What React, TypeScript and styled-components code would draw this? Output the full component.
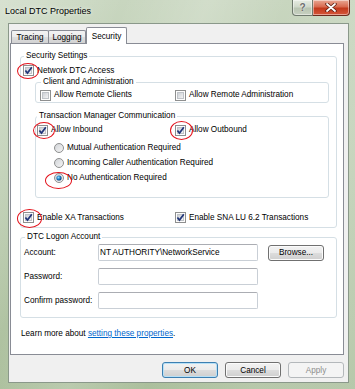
import React from "react";
import styled, { createGlobalStyle } from "styled-components";

const GlobalStyle = createGlobalStyle`
  html, body {
    margin: 0;
    padding: 0;
    background: #b7c9a8;
  }
  * {
    box-sizing: border-box;
  }
`;

const Check = ({ checked }: { checked?: boolean }) => (
  <svg width="11" height="11" viewBox="0 0 11 11">
    <defs>
      <linearGradient id="cbfill" x1="0" y1="0" x2="1" y2="1">
        <stop offset="0" stopColor="#c9cdd3" />
        <stop offset="1" stopColor="#f6f6f6" />
      </linearGradient>
    </defs>
    <rect x="0.5" y="0.5" width="10" height="10" fill="#fdfdfd" stroke="#8e8f8f" />
    <rect x="2.5" y="2.5" width="6" height="6" fill="url(#cbfill)" stroke="#bfc3c8" />
    {checked && (
      <path d="M2.4 5.4 L4.5 8.1 L8.8 2.2" fill="none" stroke="#22367a" strokeWidth="1.7" />
    )}
  </svg>
);

const Radio = ({ checked }: { checked?: boolean }) => (
  <svg width="10" height="10" viewBox="0 0 10 10">
    <defs>
      <linearGradient id="rbfill" x1="0" y1="0" x2="1" y2="1">
        <stop offset="0" stopColor="#cfd2d6" />
        <stop offset="1" stopColor="#f7f7f7" />
      </linearGradient>
      <radialGradient id="rbdot" cx="0.4" cy="0.4" r="0.6">
        <stop offset="0" stopColor="#8fdcff" />
        <stop offset="0.6" stopColor="#1a7cc4" />
        <stop offset="1" stopColor="#0b3f78" />
      </radialGradient>
    </defs>
    <circle cx="5" cy="5" r="4.5" fill="url(#rbfill)" stroke="#8e8f8f" />
    {checked && <circle cx="5" cy="5" r="2.6" fill="url(#rbdot)" />}
  </svg>
);

const Window = styled.div`
  width: 355px;
  height: 389px;
  display: flex;
  flex-direction: column;
  font-family: "Liberation Sans", Arial, sans-serif;
  font-size: 8.2px;
  color: #000;
  background:
    linear-gradient(110deg, rgba(255, 255, 255, 0.28) 0%, rgba(255, 255, 255, 0) 25%,
      rgba(255, 255, 255, 0.18) 42%, rgba(255, 255, 255, 0) 58%, rgba(255, 255, 255, 0.15) 80%),
    linear-gradient(180deg, #c8d6bf 0%, #bccdb1 45%, #abbf9c 100%);
`;

const TitleBar = styled.div`
  height: 23px;
  flex: none;
  display: flex;
  justify-content: space-between;
  align-items: flex-start;
  padding: 0 5px;
`;

const Title = styled.div`
  margin-top: 6px;
  font-size: 9px;
  line-height: 11px;
  text-shadow: 0 0 4px rgba(255, 255, 255, 0.9);
`;

const Captions = styled.div`
  display: flex;
`;

const CaptionButton = styled.div<{ $close?: boolean }>`
  height: 16px;
  width: ${(p) => (p.$close ? 37 : 21)}px;
  display: flex;
  align-items: center;
  justify-content: center;
  border: 1px solid ${(p) => (p.$close ? "#6b2a1c" : "#6f7a6e")};
  border-top: none;
  border-left-width: ${(p) => (p.$close ? 0 : 1)}px;
  border-radius: ${(p) => (p.$close ? "0 0 4px 0" : "0 0 0 4px")};
  background: ${(p) =>
    p.$close
      ? "linear-gradient(180deg, #e8a894 0%, #d86a50 45%, #c2391c 55%, #d5573a 100%)"
      : "linear-gradient(180deg, #e6ece2 0%, #d0d9cb 45%, #b9c5b2 55%, #c7d1c1 100%)"};
  box-shadow: inset 0 0 0 1px rgba(255, 255, 255, 0.45);
  color: #6e6e6e;
  font-weight: bold;
  font-size: 10px;
  text-shadow: 0 0 2px #fff;
`;

const Client = styled.div`
  height: 360px;
  margin: 0 6px 0 8px;
  flex: none;
  display: flex;
  flex-direction: column;
  border: 1px solid #8a988a;
  background: #f0f0f0;
  padding: 3px 4px 0 1px;
`;

const TabStrip = styled.div`
  height: 16px;
  display: flex;
  align-items: flex-end;
  padding-left: 1px;
`;

const Tab = styled.div<{ $active?: boolean; $w: number; $ml?: number }>`
  position: relative;
  z-index: ${(p) => (p.$active ? 1 : 0)};
  width: ${(p) => p.$w}px;
  height: ${(p) => (p.$active ? 17 : 13)}px;
  margin-left: ${(p) => p.$ml ?? 0}px;
  margin-bottom: ${(p) => (p.$active ? -1 : 0)}px;
  display: flex;
  align-items: center;
  justify-content: center;
  border: 1px solid #898c95;
  border-bottom: none;
  border-radius: 2px 2px 0 0;
  background: ${(p) =>
    p.$active ? "#fff" : "linear-gradient(180deg, #f3f3f3 0%, #ebebeb 50%, #dedede 50%, #d2d2d2 100%)"};
`;

const Panel = styled.div`
  height: 312px;
  flex: none;
  display: flex;
  flex-direction: column;
  border: 1px solid #898c95;
  background: #fff;
  padding: 7px 6px 0 9px;
`;

const Group = styled.fieldset<{ $mt?: number; $ml?: number; $mr?: number; $pad: string }>`
  margin: ${(p) => p.$mt ?? 0}px ${(p) => p.$mr ?? 0}px 0 ${(p) => p.$ml ?? 0}px;
  padding: ${(p) => p.$pad};
  border: 1px solid #d5dfe5;
  border-radius: 3px;
  min-width: 0;
`;

const Caption = styled.legend`
  padding: 0 2px;
  margin-left: 1px;
  height: 10px;
  line-height: 10px;
  white-space: nowrap;
`;

const Pair = styled.div<{ $first: number; $pl?: number; $mt?: number }>`
  display: grid;
  grid-template-columns: ${(p) => p.$first}px auto;
  padding-left: ${(p) => p.$pl ?? 0}px;
  margin-top: ${(p) => p.$mt ?? 0}px;
`;

const Option = styled.label<{ $h: number }>`
  display: flex;
  align-items: center;
  gap: 3px;
  height: ${(p) => p.$h}px;
  line-height: 10px;
  white-space: nowrap;
`;

const RadioList = styled.div`
  display: flex;
  flex-direction: column;
  padding-left: 18px;
  margin-top: 4px;
`;

const Holder = styled.span`
  position: relative;
  display: inline-flex;
  flex: none;
`;

const Ring = styled.span<{ $w: number; $h: number; $dx: number; $dy: number }>`
  position: absolute;
  left: 50%;
  top: 50%;
  width: ${(p) => p.$w}px;
  height: ${(p) => p.$h}px;
  margin-left: ${(p) => p.$dx - p.$w / 2}px;
  margin-top: ${(p) => p.$dy - p.$h / 2}px;
  border: 1.5px solid #e3121b;
  border-radius: 50%;
  pointer-events: none;
`;

const Logon = styled.div`
  display: grid;
  grid-template-columns: 64px 160px 56px;
  grid-auto-rows: 17px;
  column-gap: 10px;
  row-gap: 7px;
  align-items: center;
`;

const FieldLabel = styled.span`
  line-height: 10px;
  white-space: nowrap;
`;

const TextBox = styled.input`
  height: 17px;
  width: 160px;
  margin: 0;
  padding: 0 1px;
  border: 1px solid #c9cfd6;
  border-top-color: #abadb3;
  border-radius: 2px;
  background: #fff;
  font: inherit;
  color: #000;
  outline: none;
`;

const PushButton = styled.button<{ $default?: boolean; $disabled?: boolean }>`
  width: 56px;
  height: 16px;
  margin: 0;
  padding: 0;
  font: inherit;
  color: ${(p) => (p.$disabled ? "#8d8d8d" : "#000")};
  border: 1px solid ${(p) => (p.$default ? "#3c7fb1" : p.$disabled ? "#b4b8bb" : "#707070")};
  border-radius: 3px;
  background: ${(p) =>
    p.$disabled
      ? "#f4f4f4"
      : "linear-gradient(180deg, #f2f2f2 0%, #ebebeb 50%, #dddddd 50%, #cfcfcf 100%)"};
  box-shadow: inset 0 0 0 1px ${(p) => (p.$default ? "#b7e0f6" : p.$disabled ? "#f4f4f4" : "#fbfbfb")};
`;

const Footnote = styled.div`
  margin-top: 11px;
  padding-left: 1px;
  line-height: 10px;
`;

const Link = styled.a`
  color: #0066cc;
  text-decoration: underline;
`;

const ButtonRow = styled.div`
  margin-top: 7px;
  display: flex;
  justify-content: flex-end;
  gap: 7px;
`;

type RingSpec = { w: number; h: number; dx: number; dy: number };

const CheckOption = ({
  label, checked, h, ring,
}: { label: string; checked?: boolean; h: number; ring?: RingSpec }) => (
  <Option $h={h}>
    <Holder>
      <Check checked={checked} />
      {ring && <Ring $w={ring.w} $h={ring.h} $dx={ring.dx} $dy={ring.dy} />}
    </Holder>
    {label}
  </Option>
);

const RadioOption = ({
  label, checked, ring,
}: { label: string; checked?: boolean; ring?: RingSpec }) => (
  <Option $h={15}>
    <Holder>
      <Radio checked={checked} />
      {ring && <Ring $w={ring.w} $h={ring.h} $dx={ring.dx} $dy={ring.dy} />}
    </Holder>
    {label}
  </Option>
);

export default function App() {
  return (
    <>
      <GlobalStyle />
      <Window>
        <TitleBar>
          <Title>Local DTC Properties</Title>
          <Captions>
            <CaptionButton>?</CaptionButton>
            <CaptionButton $close>
              <svg width="12" height="9" viewBox="0 0 12 9">
                <path d="M2 1 L10 8 M10 1 L2 8" stroke="#5a1e12" strokeWidth="3.4" strokeLinecap="round" />
                <path d="M2 1 L10 8 M10 1 L2 8" stroke="#fff" strokeWidth="1.8" strokeLinecap="round" />
              </svg>
            </CaptionButton>
          </Captions>
        </TitleBar>

        <Client>
          <TabStrip>
            <Tab $w={38}>Tracing</Tab>
            <Tab $w={38} $ml={-1}>Logging</Tab>
            <Tab $w={41} $active>Security</Tab>
          </TabStrip>

          <Panel>
            <Group $pad="3px 0 3px 2px">
              <Caption>Security Settings</Caption>
              <CheckOption
                label="Network DTC Access"
                checked
                h={13}
                ring={{ w: 22, h: 16, dx: -0.5, dy: 0.5 }}
              />

              <Group $ml={12} $mr={7} $pad="2px 0 1px 4px">
                <Caption>Client and Administration</Caption>
                <Pair $first={135}>
                  <CheckOption label="Allow Remote Clients" h={12} />
                  <CheckOption label="Allow Remote Administration" h={12} />
                </Pair>
              </Group>

              <Group $mt={8} $ml={12} $mr={7} $pad="3px 0 12px 0">
                <Caption>Transaction Manager Communication</Caption>
                <Pair $first={138} $pl={1}>
                  <CheckOption
                    label="Allow Inbound"
                    checked
                    h={12}
                    ring={{ w: 22, h: 17, dx: 1.5, dy: 0.5 }}
                  />
                  <CheckOption
                    label="Allow Outbound"
                    checked
                    h={12}
                    ring={{ w: 23, h: 19, dx: 1, dy: 0.5 }}
                  />
                </Pair>
                <RadioList>
                  <RadioOption label="Mutual Authentication Required" />
                  <RadioOption label="Incoming Caller Authentication Required" />
                  <RadioOption
                    label="No Authentication Required"
                    checked
                    ring={{ w: 27, h: 17, dx: -0.5, dy: 2.5 }}
                  />
                </RadioList>
              </Group>

              <Pair $first={152} $mt={13}>
                <CheckOption
                  label="Enable XA Transactions"
                  checked
                  h={13}
                  ring={{ w: 25, h: 19, dx: 1, dy: 0.5 }}
                />
                <CheckOption label="Enable SNA LU 6.2 Transactions" checked h={13} />
              </Pair>
            </Group>

            <Group $mt={4} $pad="2px 0 8px 3px">
              <Caption>DTC Logon Account</Caption>
              <Logon>
                <FieldLabel>Account:</FieldLabel>
                <TextBox readOnly value={"NT AUTHORITY\\NetworkService"} />
                <PushButton>Browse...</PushButton>
                <FieldLabel>Password:</FieldLabel>
                <TextBox readOnly value="" />
                <span />
                <FieldLabel>Confirm password:</FieldLabel>
                <TextBox readOnly value="" />
                <span />
              </Logon>
            </Group>

            <Footnote>
              Learn more about <Link href="#">setting these properties</Link>.
            </Footnote>
          </Panel>

          <ButtonRow>
            <PushButton $default>OK</PushButton>
            <PushButton>Cancel</PushButton>
            <PushButton $disabled>Apply</PushButton>
          </ButtonRow>
        </Client>
      </Window>
    </>
  );
}
